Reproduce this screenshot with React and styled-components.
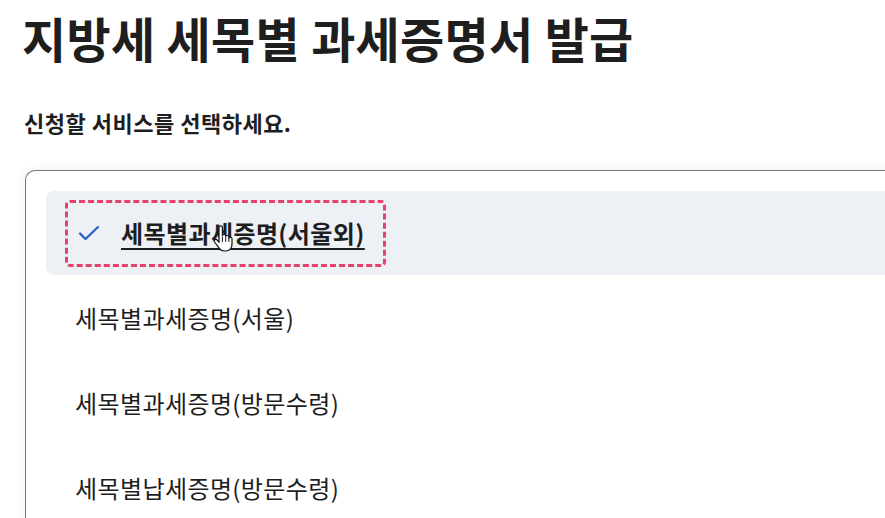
import React from "react";
import styled, { createGlobalStyle } from "styled-components";

const GlobalStyle = createGlobalStyle`
  html, body {
    margin: 0;
    padding: 0;
    background: #ffffff;
    overflow: hidden;
  }
  body {
    font-family: "Noto Sans CJK KR", "Noto Sans", sans-serif;
    color: #1e1e1e;
  }
`;

const Page = styled.div`
  padding: 5px 0 0 22px;
  width: 885px;
  height: 518px;
  box-sizing: border-box;
`;

const Title = styled.h1`
  margin: 0;
  font-size: 48px;
  font-weight: 700;
  line-height: 64px;
  letter-spacing: 0.3px;
  color: #1e1e1e;
`;

const Subtitle = styled.p`
  margin: 38px 0 0 2px;
  font-size: 22px;
  font-weight: 700;
  line-height: 30px;
  letter-spacing: 0.5px;
  color: #1e1e1e;
`;

const OptionBox = styled.div`
  margin: 33px 0 0 3px;
  width: 900px;
  padding: 20px 0 0 20px;
  box-sizing: border-box;
  border: 1px solid #777777;
  border-right: none;
  border-radius: 10px 0 0 0;
  box-shadow: 0 0 12px rgba(0, 0, 0, 0.07);
  background: #ffffff;
  display: flex;
  flex-direction: column;
  gap: 1px;
`;

const OptionRow = styled.div`
  height: 84px;
  display: flex;
  align-items: center;
  padding-left: 19px;
  border-radius: 8px 0 0 8px;
  background: ${(p) => (p.selected ? "#edf0f5" : "transparent")};
`;

const OptionLabel = styled.label`
  position: relative;
  display: inline-flex;
  align-items: center;
  gap: 20px;
  padding: 0 ${(p) => (p.selected ? "18px" : "11px")} 0 ${(p) => (p.selected ? "9px" : "7px")};
  height: ${(p) => (p.selected ? "61px" : "auto")};
  border: 3px dashed ${(p) => (p.selected ? "#e8416b" : "transparent")};
  border-radius: 5px;
  font-size: 24px;
  line-height: 30px;
  letter-spacing: 0.4px;
  font-weight: ${(p) => (p.selected ? 700 : 400)};
  text-decoration: ${(p) => (p.selected ? "underline" : "none")};
  text-decoration-thickness: 2px;
  text-underline-offset: 5px;
  color: #1e1e1e;
  cursor: pointer;
`;

const Check = styled.svg`
  width: 24px;
  height: 24px;
  flex: none;
`;

const Cursor = styled.svg`
  position: absolute;
  left: 145px;
  top: 22px;
  width: 22px;
  height: 28px;
`;

const options = [
  { label: "세목별과세증명(서울외)", selected: true },
  { label: "세목별과세증명(서울)" },
  { label: "세목별과세증명(방문수령)" },
  { label: "세목별납세증명(방문수령)" },
];

export default function App() {
  return (
    <Page>
      <GlobalStyle />
      <Title>지방세 세목별 과세증명서 발급</Title>
      <Subtitle>신청할 서비스를 선택하세요.</Subtitle>
      <OptionBox>
        {options.map((o) => (
          <OptionRow key={o.label} selected={o.selected}>
            <OptionLabel selected={o.selected}>
              {o.selected && (
                <Check viewBox="0 0 24 24" fill="none">
                  <path d="M3 12.5l5.5 5.5L21 6" stroke="#2f62c9" strokeWidth="2.4" strokeLinecap="round" strokeLinejoin="round" />
                </Check>
              )}
              {o.label}
              {o.selected && (
                <Cursor viewBox="0 0 22 28">
                  <path
                    d="M6 2.5c0-1 .8-1.7 1.7-1.7s1.7.7 1.7 1.7v8.2c.2-.9 1-1.4 1.8-1.3.9.1 1.5.8 1.5 1.7v.6c.2-.8.9-1.3 1.7-1.2.9.1 1.5.8 1.5 1.7v1c.2-.7.9-1.2 1.6-1.1.9.1 1.5.8 1.5 1.7v5.6c0 3.6-2.6 6.6-6.3 6.6h-1.4c-2.2 0-3.8-.9-5-2.7L1.6 17c-.5-.8-.3-1.8.4-2.3.8-.5 1.7-.3 2.3.4L6 17.4V2.5z"
                    fill="#ffffff"
                    stroke="#111111"
                    strokeWidth="1.2"
                    strokeLinejoin="round"
                  />
                  <path d="M9.4 12v4.5M12.7 12.5v4M15.9 13.5v3" stroke="#111111" strokeWidth="1" strokeLinecap="round" />
                </Cursor>
              )}
            </OptionLabel>
          </OptionRow>
        ))}
      </OptionBox>
    </Page>
  );
}
